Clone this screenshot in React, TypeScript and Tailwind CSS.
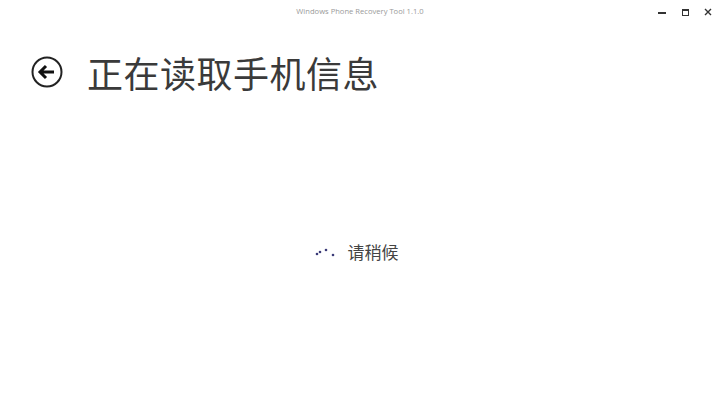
import React from "react";

export default function App() {
  return (
    <div
      className="w-[720px] h-[406px] bg-white flex flex-col overflow-hidden"
      style={{ fontFamily: '"Noto Sans CJK SC", "Noto Sans", sans-serif' }}
    >
      <div className="relative h-[24px] flex items-center justify-center">
        <span className="text-[7.6px] text-[#9a9a9a] font-['Open_Sans',sans-serif]">
          Windows Phone Recovery Tool 1.1.0
        </span>
        <div className="absolute right-[6px] top-[6px] flex items-center gap-[11px]">
          <div className="w-[12px] h-[12px] flex items-center justify-center">
            <div className="w-[8px] h-[2px] bg-[#333] mt-[2px]" />
          </div>
          <div className="w-[12px] h-[12px] flex items-center justify-center">
            <div className="w-[7px] h-[7px] border border-[#333] border-t-2" />
          </div>
          <div className="w-[12px] h-[12px] flex items-center justify-center">
            <svg width="8" height="8" viewBox="0 0 8 8">
              <path d="M1 1L7 7M7 1L1 7" stroke="#333" strokeWidth="1.4" />
            </svg>
          </div>
        </div>
      </div>
      <div className="flex items-center pl-[31px] mt-[30px] gap-[24px]">
        <svg width="32" height="32" viewBox="0 0 32 32">
          <circle cx="16" cy="16" r="14.5" fill="none" stroke="#222" strokeWidth="2" />
          <path d="M9 16H23M15 10L9 16L15 22" fill="none" stroke="#111" strokeWidth="3" strokeLinejoin="miter" />
        </svg>
        <h1 className="text-[36px] font-normal text-[#3a3a3a] leading-none tracking-[0.5px]">正在读取手机信息</h1>
      </div>
      <div className="flex-1 flex items-start justify-center pt-[153px]">
        <div className="flex items-center gap-[12px] mr-[8px]">
          <svg width="22" height="10" viewBox="0 0 22 10">
            <circle cx="3" cy="7" r="1.3" fill="#3b3b78" />
            <circle cx="6" cy="5" r="1.3" fill="#3b3b78" />
            <circle cx="12" cy="3" r="1.3" fill="#3b3b78" />
            <circle cx="19" cy="8" r="1.3" fill="#3b3b78" />
          </svg>
          <span className="text-[17px] text-[#444] leading-none">请稍候</span>
        </div>
      </div>
    </div>
  );
}
